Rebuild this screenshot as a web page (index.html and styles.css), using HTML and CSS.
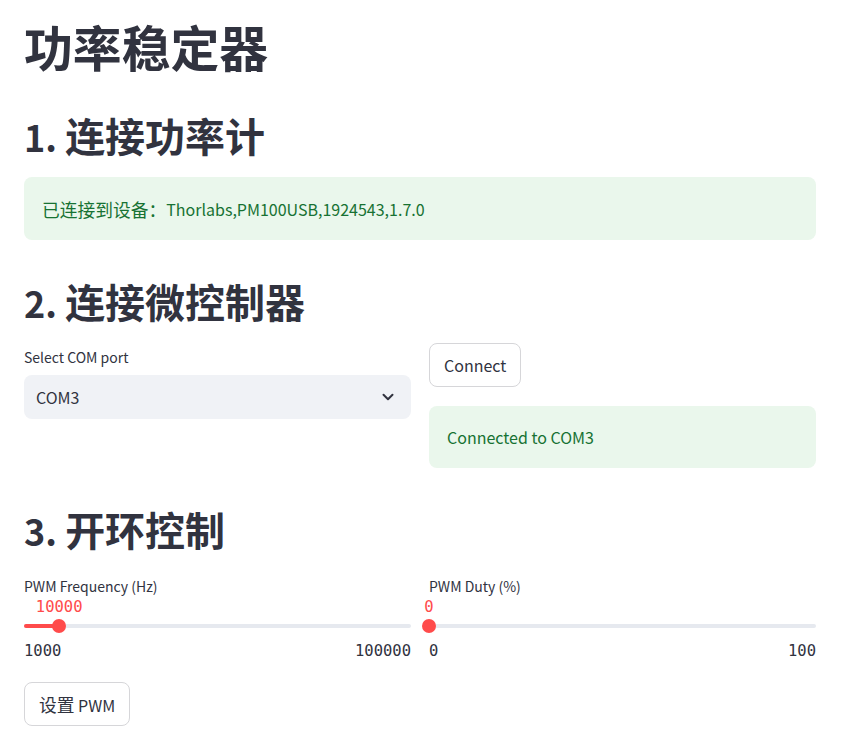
FILE: index.html
```html
<!DOCTYPE html>
<html lang="zh">
<head>
<meta charset="utf-8">
<title>功率稳定器</title>
<link rel="stylesheet" href="styles.css">
</head>
<body>
<main class="main">
  <h1 class="title"><span class="cjk">功率稳定器</span></h1>

  <h2 class="heading h-first">1. <span class="cjk">连接功率计</span></h2>
  <div class="alert alert-wide"><span class="cjk">已连接到设备：</span>Thorlabs,PM100USB,1924543,1.7.0</div>

  <h2 class="heading h-second">2. <span class="cjk">连接微控制器</span></h2>
  <div class="cols cols-connect">
    <div class="col">
      <label class="label">Select COM port</label>
      <div class="select">
        <span>COM3</span>
        <svg class="chev" width="14" height="14" viewBox="0 0 14 14"><path d="M2.5 4.8 L7 9.3 L11.5 4.8" fill="none" stroke="#31333f" stroke-width="2" stroke-linecap="round" stroke-linejoin="round"/></svg>
      </div>
    </div>
    <div class="col col-right">
      <div><button class="btn">Connect</button></div>
      <div class="alert alert-small">Connected to COM3</div>
    </div>
  </div>

  <h2 class="heading h-third">3. <span class="cjk">开环控制</span></h2>
  <div class="cols cols-sliders">
    <div class="slider">
      <div class="label slabel">PWM Frequency (Hz)</div>
      <div class="value-row"><span class="value" style="left: 9.09%">10000</span></div>
      <div class="track-row">
        <div class="track"><div class="fill" style="width: 9.09%"></div></div>
        <div class="thumb" style="left: 9.09%"></div>
      </div>
      <div class="minmax"><span>1000</span><span>100000</span></div>
    </div>
    <div class="slider">
      <div class="label slabel">PWM Duty (%)</div>
      <div class="value-row"><span class="value" style="left: 0%">0</span></div>
      <div class="track-row">
        <div class="track"><div class="fill" style="width: 0%"></div></div>
        <div class="thumb" style="left: 0%"></div>
      </div>
      <div class="minmax"><span>0</span><span>100</span></div>
    </div>
  </div>

  <button class="btn btn-pwm"><span class="cjk">设置</span> PWM</button>
</main>
</body>
</html>
```

FILE: styles.css
```css
* { box-sizing: border-box; }
html, body { margin: 0; padding: 0; background: #ffffff; }
body {
  font-family: "Noto Sans CJK SC", "Noto Sans", sans-serif;
  color: #31333f;
  font-size: 16px;
}
.cjk { font-size: 1.11em; }
.main {
  width: 792px;
  margin-left: 24px;
  padding-top: 16px;
  display: flex;
  flex-direction: column;
  align-items: stretch;
}
.title {
  margin: 0;
  font-size: 44px;
  line-height: 60px;
  height: 60px;
  font-weight: 700;
}
.heading {
  margin: 0;
  font-size: 36px;
  line-height: 48px;
  height: 48px;
  font-weight: 700;
}
.h-first { margin-top: 35px; }
.h-second { margin-top: 37px; }
.h-third { margin-top: 37px; }

.alert {
  background: #eaf7ec;
  color: #177233;
  border-radius: 8px;
  display: flex;
  align-items: center;
  padding: 0 18px;
  font-size: 16px;
  line-height: 24px;
}
.alert-wide { margin-top: 18px; height: 63px; }
.alert-small { height: 62px; margin-top: 19px; }

.cols {
  display: grid;
  grid-template-columns: 1fr 1fr;
  column-gap: 18px;
}
.cols-connect { margin-top: 18px; }
.col { display: flex; flex-direction: column; }
.label {
  font-size: 14px;
  line-height: 28px;
  height: 28px;
}
.select {
  margin-top: 4px;
  height: 44px;
  background: #f0f2f6;
  border-radius: 8px;
  display: flex;
  align-items: center;
  justify-content: space-between;
  padding: 0 16px 0 12px;
  font-size: 16px;
}
.chev { display: block; }

.btn {
  font-family: "Noto Sans CJK SC", "Noto Sans", sans-serif;
  font-size: 16px;
  line-height: 24px;
  color: #31333f;
  background: #ffffff;
  border: 1px solid #d6d6d9;
  border-radius: 8px;
  height: 44px;
  padding: 0 14px;
  cursor: pointer;
}
.btn-pwm { margin-top: 20px; align-self: flex-start; }

.cols-sliders { margin-top: 23px; }
.slider { display: flex; flex-direction: column; }
.slabel { line-height: 20px; height: 20px; }
.value-row {
  position: relative;
  height: 22px;
}
.value {
  position: absolute;
  top: 0;
  transform: translateX(-50%);
  font-family: "DejaVu Sans Mono", "Liberation Mono", monospace;
  font-size: 15.5px;
  line-height: 22px;
  color: #ff4b4b;
}
.track-row {
  position: relative;
  height: 16px;
  display: flex;
  align-items: center;
}
.track {
  width: 100%;
  height: 4px;
  border-radius: 2px;
  background: #e6e9ef;
  display: flex;
}
.fill { height: 100%; background: #ff4b4b; border-radius: 2px 0 0 2px; }
.thumb {
  position: absolute;
  top: 1px;
  width: 14px;
  height: 14px;
  margin-left: -7px;
  border-radius: 50%;
  background: #ff4b4b;
}
.minmax {
  margin-top: 6px;
  display: flex;
  justify-content: space-between;
  font-family: "DejaVu Sans Mono", "Liberation Mono", monospace;
  font-size: 15.5px;
  line-height: 22px;
  color: #31333f;
}
```
